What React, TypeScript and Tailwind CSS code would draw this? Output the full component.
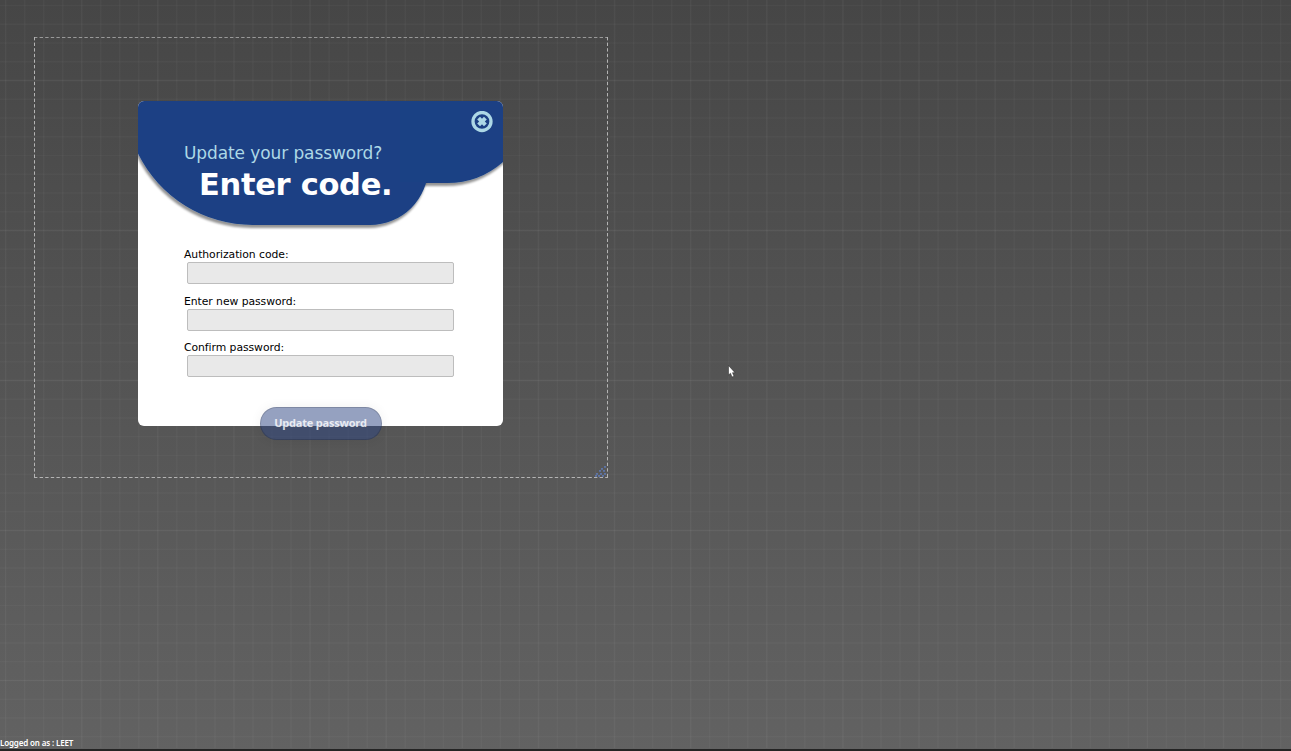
import React from "react";

const fields = ["Authorization code:", "Enter new password:", "Confirm password:"];

function GridBackground() {
  return (
    <svg className="absolute inset-0" width="1291" height="751" aria-hidden="true">
      <defs>
        <linearGradient id="shade" x1="0" y1="0" x2="0" y2="1">
          <stop offset="0" stopColor="#464646" />
          <stop offset="1" stopColor="#626262" />
        </linearGradient>
      </defs>
      <rect width="1291" height="751" fill="url(#shade)" />
      <g stroke="#fff" strokeWidth="1.5">
        {Array.from({ length: 68 }, (_, i) => (
          <path key={"v" + i} d={`M${5.6 + i * 19.03} 0V748`} strokeOpacity={i % 4 === 0 ? 0.042 : 0.03} />
        ))}
        {Array.from({ length: 40 }, (_, i) => (
          <path key={"h" + i} d={`M0 ${5.5 + i * 18.75}H1291`} strokeOpacity={i % 8 === 4 ? 0.06 : 0.028} />
        ))}
      </g>
      <rect y="749" width="1291" height="2" fill="#242424" />
    </svg>
  );
}

function HeaderShape() {
  return (
    <svg className="absolute inset-0" width="365" height="135" viewBox="138 101 365 135" aria-hidden="true">
      <defs>
        <filter id="blobShadow" x="-10%" y="-10%" width="120%" height="130%">
          <feDropShadow dx="-1" dy="3" stdDeviation="1.3" floodColor="#000" floodOpacity="0.42" />
        </filter>
      </defs>
      <path filter="url(#blobShadow)" fill="#1a4184" d="M400 90H520V150L503 162A85 85 0 0 1 447 183H400Z" />
      <path
        filter="url(#blobShadow)"
        fill="#1a4184"
        d="M130 90H428.3V166.7A58.3 58.3 0 0 1 370 225H253A128 128 0 0 1 138 153.5L130 140Z"
      />
      <rect x="400" y="100" width="60" height="82" fill="#1a4184" />
    </svg>
  );
}

export default function App() {
  return (
    <div className="relative h-[751px] w-[1291px] overflow-hidden bg-[#555] font-['DejaVu_Sans',Verdana,sans-serif]">
      <GridBackground />
      <div className="relative flex h-full flex-col justify-between pt-[37px]">
        <div className="relative ml-[34px] h-[441px] w-[574px] pt-[64px] pl-[104px]">
          <svg className="absolute inset-0" width="574" height="441" aria-hidden="true">
            <path d="M0 .5H574" stroke="#999" strokeDasharray="3.4 2.2" />
            <path d="M.5 0V441M573.5 0V441M0 440.5H574" stroke="#b4b4b4" strokeDasharray="3.4 2.2" />
            <g fill="#5f7dc0" fillOpacity="0.75">
              {[[570, 429], [567, 431], [565, 433], [569, 433], [562, 436], [566, 436], [570, 436], [561, 438], [564, 438], [568, 438]].map(([x, y]) => (
                <rect key={`${x}-${y}`} x={x} y={y} width="2" height="1.8" />
              ))}
            </g>
          </svg>
          <main className="relative h-[325px] w-[365px] rounded-[6px] bg-white">
            <div className="absolute inset-0 overflow-hidden rounded-[6px]">
              <HeaderShape />
            </div>
            <button className="absolute top-[9.5px] left-[333px] size-[22px]" aria-label="Close">
              <svg width="22" height="22" viewBox="0 0 22 22" fill="none" stroke="#add8e6">
                <circle cx="11" cy="10.5" r="9" strokeWidth="3.3" />
                <path d="M7.6 7.1l6.8 6.8M14.4 7.1l-6.8 6.8" strokeWidth="4" />
              </svg>
            </button>
            <header className="relative h-[146px] pt-[40px] pl-[46px]">
              <p className="h-[24px] text-[17px] leading-[24px] tracking-[-0.1px] whitespace-nowrap text-[#add8e6]">Update your password?</p>
              <h1 className="h-[40px] pl-[15px] text-[30.5px] leading-[39px] font-bold tracking-[-0.3px] whitespace-nowrap text-white">Enter code.</h1>
            </header>
            <form className="relative flex flex-col">
              <div className="flex flex-col pl-[46px]">
                {fields.map((label) => (
                  <label key={label} className="flex h-[46.5px] flex-col text-[10.8px] leading-[15px] tracking-[-0.05px] text-black">
                    <span className="whitespace-nowrap">{label}</span>
                    <input className="ml-[3px] h-[22.4px] w-[267px] rounded-[2px] border border-[#bdbdbd] bg-[#e9e9e9]" />
                  </label>
                ))}
              </div>
              <button
                type="button"
                className="mt-[20.5px] h-[33px] w-[122px] self-center rounded-full border border-black/15 bg-[#2b4481]/50 font-['Open_Sans',sans-serif] text-[11px] font-bold tracking-[-0.2px] whitespace-nowrap text-white/80 shadow-[0_0_12px_rgba(0,0,0,0.06)]"
              >
                Update password
              </button>
            </form>
          </main>
        </div>
        <p className="h-[14px] font-['Noto_Sans',sans-serif] text-[8px] leading-[12px] font-semibold tracking-[-0.15px] whitespace-nowrap text-white">Logged on as : LEET</p>
      </div>
      <svg className="absolute top-[365px] left-[728px]" width="8" height="13" viewBox="0 0 8 13" aria-hidden="true">
        <path d="M.5.5V10L2.5 8.2L4 12L6 11.2L4.5 7.7H7Z" fill="#fff" stroke="#222" strokeWidth=".5" />
      </svg>
    </div>
  );
}
